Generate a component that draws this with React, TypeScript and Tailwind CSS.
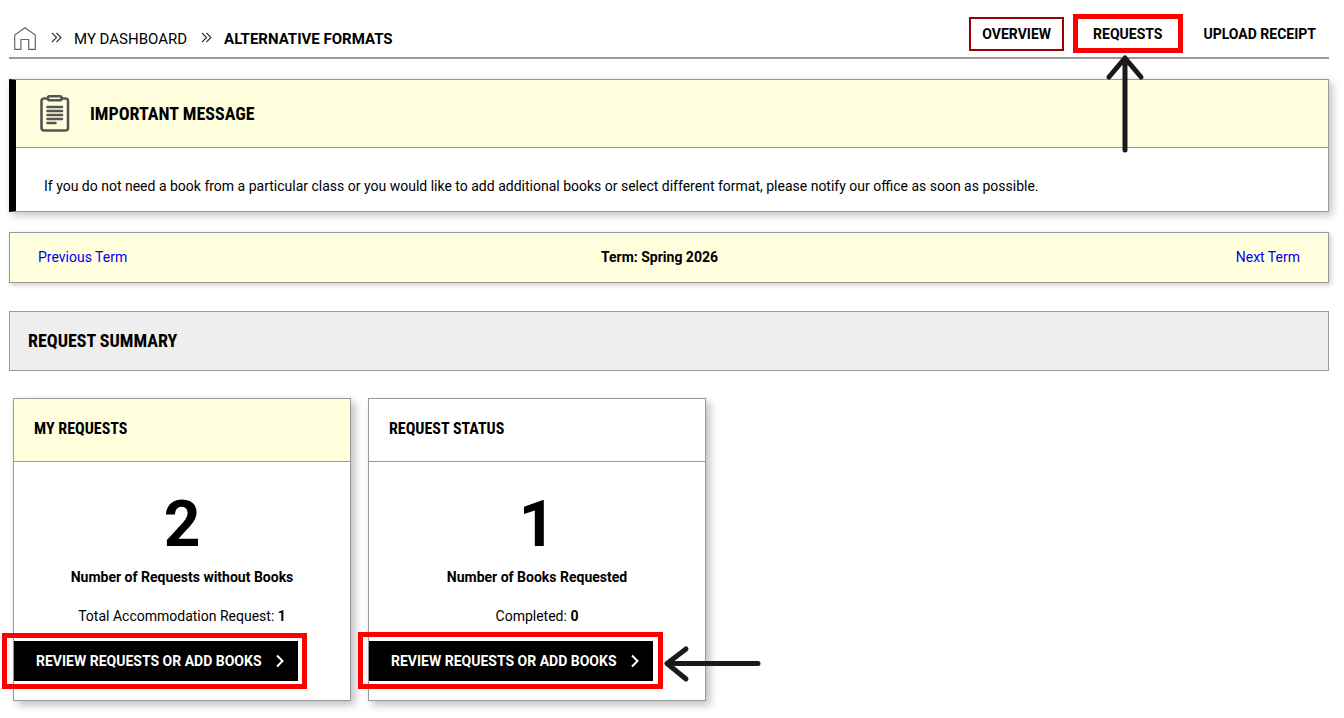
import React from "react";

const Chevrons = () => (
  <svg width="11" height="11" viewBox="0 0 11 11" fill="none" stroke="#333" strokeWidth="1.1">
    <path d="M1 1l4.5 4.5L1 10M5.5 1L10 5.5 5.5 10" />
  </svg>
);

const HomeIcon = () => (
  <svg className="mb-px" width="22" height="23" viewBox="0 0 22 23" fill="none" stroke="#666" strokeWidth="1.2">
    <path d="M.7 22.4V8L11 .8 21.3 8v14.4h-6.6V12.5H6.9v9.9z" />
  </svg>
);

const ClipboardIcon = () => (
  <svg width="30" height="37" viewBox="0 0 30 37" fill="none" stroke="#555" strokeWidth="2.6" strokeLinecap="round">
    <rect x="1.5" y="3.5" width="26.5" height="32" rx="2.5" />
    <rect x="8" y="1.3" width="13.5" height="4" rx="1.5" fill="#ffffdd" />
    <path d="M7.5 12h14.5M7.5 16h14.5M7.5 20h14.5M7.5 24h14.5M7.5 28h8" />
  </svg>
);

const BookButton = ({ frame }: { frame: string }) => (
  <div className="relative w-[284px]">
    <a className="flex h-10 items-center bg-black pl-[22px] text-sm font-bold text-white">
      REVIEW REQUESTS OR ADD BOOKS
      <svg className="ml-[13px]" width="10" height="14" viewBox="0 0 10 14" fill="none" stroke="#fff" strokeWidth="2">
        <path d="M2 1.5L7.5 7 2 12.5" />
      </svg>
    </a>
    <div className={`absolute -bottom-2 border-[5px] border-[#ff0000] ${frame}`} />
  </div>
);

const Card = ({
  title,
  yellow,
  count,
  label,
  stat,
  value,
  frame,
}: {
  title: string;
  yellow?: boolean;
  count: string;
  label: string;
  stat: string;
  value: string;
  frame: string;
}) => (
  <div className="flex h-[303px] w-[338px] flex-col border border-[#999] bg-white shadow-[4px_4px_8px_rgba(0,0,0,0.25)]">
    <div className={`flex h-[63px] items-center border-b border-[#999] px-5 pb-[2px] ${yellow ? "bg-[#ffffdd]" : "bg-white"}`}>
      <h3 className="text-base font-bold [font-stretch:75%]">{title}</h3>
    </div>
    <div className="flex flex-col items-center">
      <div className="mt-[28px] text-[64px] font-bold leading-[70px]">{count}</div>
      <div className="mt-[7px] text-sm font-bold leading-5">{label}</div>
      <div className="mt-[19px] text-sm leading-5">
        {stat}: <b>{value}</b>
      </div>
    </div>
    <div className="mt-[15px]">
      <BookButton frame={frame} />
    </div>
  </div>
);

export default function App() {
  return (
    <div className="relative h-[718px] overflow-hidden bg-white pl-[9px] pr-[15px] font-['Roboto',sans-serif] text-black">
      <header className="flex h-[59px] items-start justify-between border-b-2 border-[#999]">
        <div className="flex items-center pl-[5px] pt-[27px]">
          <HomeIcon />
          <span className="ml-[15px] mb-1"><Chevrons /></span>
          <span className="ml-3 text-[15px] leading-6">MY DASHBOARD</span>
          <span className="ml-[14px] mb-1"><Chevrons /></span>
          <span className="ml-3 text-[15px] font-bold leading-6">ALTERNATIVE FORMATS</span>
        </div>
        <nav className="flex items-center pt-[17px] text-sm font-bold">
          <a className="flex h-[34px] items-center border-2 border-[#990000] px-[11px]">OVERVIEW</a>
          <a className="relative ml-4 flex h-[34px] items-center px-[13px]">
            REQUESTS
            <span className="absolute -left-[7px] -right-[8px] -top-[3px] -bottom-[2px] border-[5px] border-[#ff0000]" />
          </a>
          <a className="ml-[15px] flex h-[34px] items-center px-[13px]">UPLOAD RECEIPT</a>
        </nav>
      </header>

      <section className="mt-5 border border-l-[7px] border-[#999] border-l-black shadow-[3px_3px_8px_rgba(0,0,0,0.25)]">
        <div className="flex h-[68px] items-center border-b border-[#999] bg-[#ffffdd] pl-[24px]">
          <ClipboardIcon />
          <h2 className="ml-[20px] text-lg font-bold [font-stretch:75%]">IMPORTANT MESSAGE</h2>
        </div>
        <p className="h-[63px] pl-7 pt-[28px] text-sm leading-5">
          If you do not need a book from a particular class or you would like to add additional books or select different format, please notify our office as soon as possible.
        </p>
      </section>

      <div className="mt-5 flex h-[51px] items-center justify-between border border-[#999] bg-[#ffffdd] px-7 pb-[2px] text-sm shadow-[2px_2px_5px_rgba(0,0,0,0.2)]">
        <a className="text-[#0000ee]">Previous Term</a>
        <b className="mr-[44px]">Term: Spring 2026</b>
        <a className="text-[#0000ee]">Next Term</a>
      </div>

      <div className="mt-7 flex h-[60px] items-center border border-[#999] bg-[#eeeeee] px-[18px]">
        <h2 className="text-lg font-bold [font-stretch:75%]">REQUEST SUMMARY</h2>
      </div>

      <div className="mt-[27px] flex gap-[17px] pl-1">
        <Card title="MY REQUESTS" yellow count="2" label="Number of Requests without Books" stat="Total Accommodation Request" value="1" frame="-left-3 -right-[9px] -top-2" />
        <Card title="REQUEST STATUS" count="1" label="Number of Books Requested" stat="Completed" value="0" frame="-left-[11px] -right-[10px] -top-[9px]" />
      </div>

      {/* hand drawn arrows on top of the screenshot */}
      <svg className="absolute left-[1105px] top-[54px]" width="40" height="100" viewBox="0 0 40 100" fill="none" stroke="#1a1a1a" strokeWidth="5" strokeLinecap="round" strokeLinejoin="round">
        <path d="M20 96V4M4 23L20 4l16 19" />
      </svg>
      <svg className="absolute left-[662px] top-[644px]" width="102" height="40" viewBox="0 0 102 40" fill="none" stroke="#1a1a1a" strokeWidth="5" strokeLinecap="round" strokeLinejoin="round">
        <path d="M96 19.5H5M24 5L5 19.5 24 35" />
      </svg>
    </div>
  );
}
